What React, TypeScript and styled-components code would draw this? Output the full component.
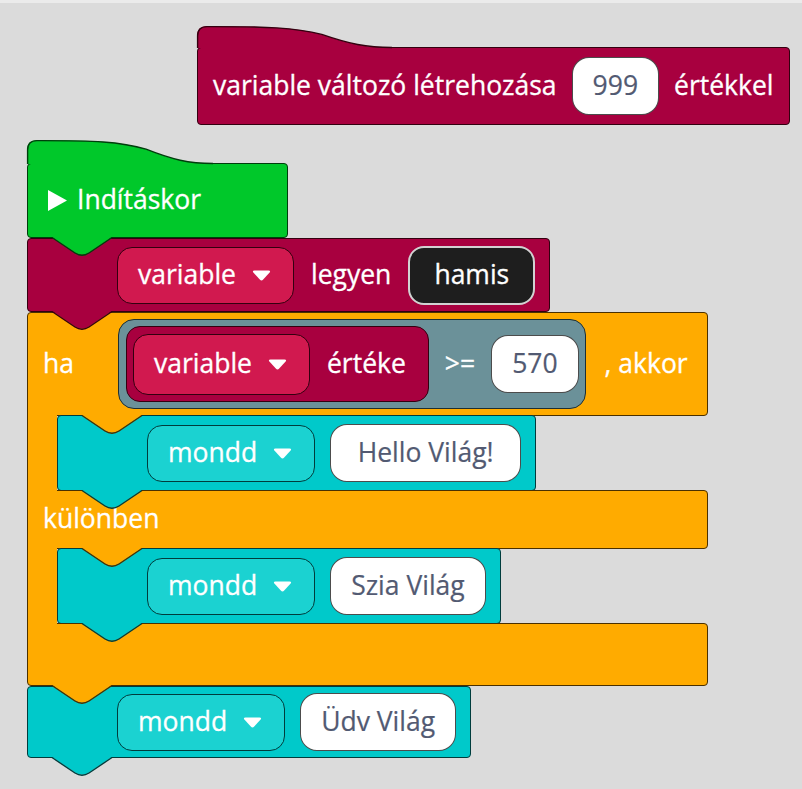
import React from 'react';
import styled, { createGlobalStyle } from 'styled-components';

type Palette = { fill: string; edge: string; field: string };

const VARIABLES: Palette = { fill: '#a8003f', edge: '#33000f', field: '#d1194f' };
const EVENTS: Palette = { fill: '#00c82a', edge: '#003d0c', field: '#00c82a' };
const LOGIC: Palette = { fill: '#ffab00', edge: '#4a3000', field: '#ffab00' };
const SPEECH: Palette = { fill: '#00c9ca', edge: '#003c3c', field: '#1bd2d1' };
const COMPARE: Palette = { fill: '#6b9199', edge: '#1d2f33', field: '#6b9199' };

const GlobalStyle = createGlobalStyle`
  body {
    margin: 0;
    background: #dbdbdb;
    font-family: "Open Sans", "Noto Sans", sans-serif;
  }
`;

const Hat = ({ c, width, height }: { c: Palette; width: number; height: number }) => {
  const W = width;
  const H = height;
  const curve = `C ${W * 0.36} 0.5 ${W * 0.5} 1.5 ${W * 0.64} ${H * 0.4} C ${W * 0.78} ${H * 0.85} ${W * 0.87} ${H + 0.5} ${W} ${H + 0.5}`;
  return (
    <HatSvg width={W} height={H + 1} viewBox={`0 0 ${W} ${H + 1}`}>
      <path d={`M0 ${H + 1} L0 10 Q0 0 10 0 ${curve} L${W} ${H + 1} Z`} fill={c.fill} />
      <path d={`M0.6 ${H + 1} L0.6 10 Q0.6 0.6 10 0.6 ${curve}`} fill="none" stroke={c.edge} strokeWidth="1.4" />
    </HatSvg>
  );
};

const Tab = ({ c, left }: { c: Palette; left: number }) => (
  <TabSvg $left={left} width="60" height="20" viewBox="0 0 60 20">
    <path d="M0 0 L23 15.5 Q30 20 37 15.5 L60 0 Z" fill={c.fill} />
    <path d="M0 0.5 L23 16 Q30 20.5 37 16 L60 0.5" fill="none" stroke={c.edge} strokeWidth="1.4" />
  </TabSvg>
);

const Caret = () => (
  <svg width="19" height="11" viewBox="0 0 19 11">
    <path d="M2.5 0.5 H16.5 Q19 0.5 17.6 2.6 L11.2 9.6 Q9.5 11.3 7.8 9.6 L1.4 2.6 Q0 0.5 2.5 0.5 Z" fill="#fff" />
  </svg>
);

const PlayIcon = () => (
  <svg width="19" height="21" viewBox="0 0 19 21">
    <path d="M0 0 L19 10.5 L0 21 Z" fill="#fff" />
  </svg>
);

export default function App() {
  return (
    <>
      <GlobalStyle />
      <Canvas>
        <Stack $x={197} $y={44}>
          <Block $c={VARIABLES} $h={78} $pl={15} $pr={15} $gap={15}>
            <Hat c={VARIABLES} width={195} height={21} />
            <Label>variable változó létrehozása</Label>
            <TextField>999</TextField>
            <Label>értékkel</Label>
          </Block>
        </Stack>

        <Stack $x={27} $y={160}>
          <Block $c={EVENTS} $h={75} $pl={20} $pr={0} $gap={10} $w={261}>
            <Hat c={EVENTS} width={186} height={23} />
            <PlayIcon />
            <Label>Indításkor</Label>
            <Tab c={EVENTS} left={24} />
          </Block>

          <Block $c={VARIABLES} $h={74} $pl={89} $pr={14} $gap={17}>
            <Dropdown $c={VARIABLES}>
              variable <Caret />
            </Dropdown>
            <Label>legyen</Label>
            <BoolField>hamis</BoolField>
            <Tab c={VARIABLES} left={24} />
          </Block>

          <CBlock>
            <Arm $c={LOGIC} $h={104} $shape="top">
              <Keyword>ha</Keyword>
              <Condition>
                <Reporter $c={VARIABLES}>
                  <Dropdown $c={VARIABLES} $h={61}>
                    variable <Caret />
                  </Dropdown>
                  <Label>értéke</Label>
                </Reporter>
                <Label>&gt;=</Label>
                <TextField>570</TextField>
              </Condition>
              <Label>, akkor</Label>
              <Tab c={LOGIC} left={54} />
            </Arm>

            <Mouth>
              <MouthBar $c={LOGIC} />
              <Block $c={SPEECH} $h={76} $pl={89} $pr={14} $gap={15}>
                <Dropdown $c={SPEECH}>
                  mondd <Caret />
                </Dropdown>
                <TextField $w={191}>Hello Világ!</TextField>
                <Tab c={SPEECH} left={24} />
              </Block>
            </Mouth>

            <Arm $c={LOGIC} $h={59} $shape="middle">
              <Label>különben</Label>
              <Tab c={LOGIC} left={54} />
            </Arm>

            <Mouth>
              <MouthBar $c={LOGIC} />
              <Block $c={SPEECH} $h={76} $pl={89} $pr={14} $gap={15}>
                <Dropdown $c={SPEECH}>
                  mondd <Caret />
                </Dropdown>
                <TextField>Szia Világ</TextField>
                <Tab c={SPEECH} left={24} />
              </Block>
            </Mouth>

            <Arm $c={LOGIC} $h={63} $shape="bottom">
              <Tab c={LOGIC} left={24} />
            </Arm>
          </CBlock>

          <Block $c={SPEECH} $h={72} $pl={89} $pr={14} $gap={15}>
            <Dropdown $c={SPEECH}>
              mondd <Caret />
            </Dropdown>
            <TextField>Üdv Világ</TextField>
            <Tab c={SPEECH} left={24} />
          </Block>
        </Stack>
      </Canvas>
    </>
  );
}

const Canvas = styled.div`
  position: relative;
  width: 802px;
  height: 789px;
  box-sizing: border-box;
  border-top: 3px solid #ebebeb;
  background: #dbdbdb;
  overflow: hidden;
  color: #fff;
  font-size: 26.5px;
  line-height: 1;
  -webkit-text-stroke: 0.3px currentColor;
`;

const Stack = styled.div<{ $x: number; $y: number }>`
  position: absolute;
  left: ${(p) => p.$x}px;
  top: ${(p) => p.$y}px;
  display: flex;
  flex-direction: column;
  align-items: flex-start;
`;

const Block = styled.div<{
  $c: Palette;
  $h: number;
  $pl: number;
  $pr: number;
  $gap: number;
  $w?: number;
}>`
  position: relative;
  display: flex;
  align-items: center;
  gap: ${(p) => p.$gap}px;
  box-sizing: border-box;
  width: ${(p) => (p.$w ? `${p.$w}px` : 'auto')};
  min-height: ${(p) => p.$h}px;
  padding: 0 ${(p) => p.$pr}px 0 ${(p) => p.$pl}px;
  background: ${(p) => p.$c.fill};
  border: 1px solid ${(p) => p.$c.edge};
  border-radius: 4px;
`;

const HatSvg = styled.svg`
  position: absolute;
  left: -1px;
  bottom: 100%;
  display: block;
  overflow: visible;
`;

const TabSvg = styled.svg<{ $left: number }>`
  position: absolute;
  top: 100%;
  left: ${(p) => p.$left}px;
  z-index: 2;
  display: block;
  overflow: visible;
`;

const Label = styled.span`
  white-space: nowrap;
  padding-bottom: 2px;
`;

const Keyword = styled(Label)`
  margin-right: 25px;
`;

const Dropdown = styled.div<{ $c: Palette; $h?: number }>`
  display: flex;
  align-items: center;
  gap: 16px;
  box-sizing: border-box;
  height: ${(p) => p.$h ?? 57}px;
  padding: 0 22px 2px 20px;
  background: ${(p) => p.$c.field};
  border: 1px solid ${(p) => p.$c.edge};
  border-radius: 15px;
  white-space: nowrap;

  svg {
    margin-top: 2px;
  }
`;

const TextField = styled.div<{ $w?: number }>`
  display: flex;
  align-items: center;
  justify-content: center;
  box-sizing: border-box;
  height: 58px;
  min-width: ${(p) => p.$w ?? 86}px;
  padding: 0 20px 2px;
  background: #fff;
  color: #525a72;
  border: 1px solid rgba(0, 0, 0, 0.7);
  border-radius: 17px;
  white-space: nowrap;
  -webkit-text-stroke: 0.2px currentColor;
`;

const BoolField = styled.div`
  display: flex;
  align-items: center;
  box-sizing: border-box;
  height: 59px;
  padding: 0 24px 2px;
  background: #1e1e1e;
  border: 2px solid #d2d2d2;
  border-radius: 16px;
  white-space: nowrap;
`;

const Condition = styled.div`
  display: flex;
  align-items: center;
  gap: 16px;
  box-sizing: border-box;
  height: 90px;
  padding: 0 6px 0 7px;
  background: ${COMPARE.fill};
  border: 1px solid ${COMPARE.edge};
  border-radius: 16px;
`;

const Reporter = styled.div<{ $c: Palette }>`
  display: flex;
  align-items: center;
  gap: 17px;
  box-sizing: border-box;
  height: 76px;
  padding: 0 22px 0 6px;
  background: ${(p) => p.$c.fill};
  border: 1px solid ${(p) => p.$c.edge};
  border-radius: 14px;
`;

const CBlock = styled.div`
  display: flex;
  flex-direction: column;
  align-items: stretch;
`;

const armRadius = {
  top: '4px 4px 4px 0',
  middle: '0 4px 4px 0',
  bottom: '0 4px 4px 4px',
};

const Arm = styled.div<{ $c: Palette; $h: number; $shape: keyof typeof armRadius }>`
  position: relative;
  display: flex;
  align-items: center;
  gap: 19px;
  box-sizing: border-box;
  min-height: ${(p) => p.$h}px;
  padding: 0 19px 0 15px;
  background: ${(p) => p.$c.fill};
  border: 1px solid ${(p) => p.$c.edge};
  border-radius: ${(p) => armRadius[p.$shape]};
`;

const Mouth = styled.div`
  display: flex;
  align-items: stretch;
  margin: -1px 0;
`;

const MouthBar = styled.div<{ $c: Palette }>`
  position: relative;
  z-index: 1;
  width: 30px;
  box-sizing: border-box;
  background: ${(p) => p.$c.fill};
  border-left: 1px solid ${(p) => p.$c.edge};
`;
